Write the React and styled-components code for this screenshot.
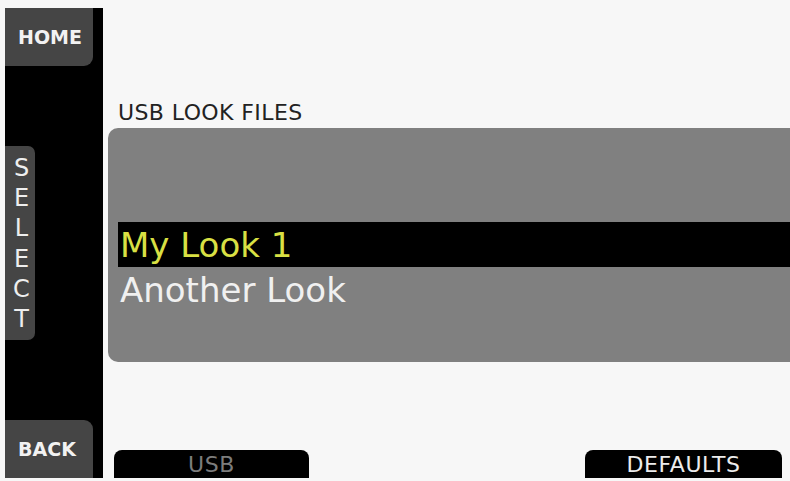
import React from "react";
import styled, { createGlobalStyle } from "styled-components";

const GlobalStyle = createGlobalStyle`
  html, body {
    margin: 0;
    padding: 0;
    background: #f7f7f7;
  }
  body {
    font-family: "DejaVu Sans", "Liberation Sans", sans-serif;
  }
`;

const Screen = styled.div`
  width: 790px;
  height: 481px;
  display: flex;
  box-sizing: border-box;
  padding: 8px 0 3px 5px;
  background: #f7f7f7;
  overflow: hidden;
`;

const Sidebar = styled.div`
  width: 98px;
  background: #000;
  display: flex;
  flex-direction: column;
  justify-content: space-between;
  align-items: flex-start;
`;

const SideButton = styled.div`
  width: 88px;
  height: 58px;
  background: #454545;
  color: #f2f2f2;
  font-size: 19px;
  font-weight: bold;
  display: flex;
  align-items: center;
  padding-left: 13px;
  box-sizing: border-box;
  border-radius: ${(p) => (p.top ? "0 0 9px 0" : "0 9px 0 0")};
`;

const SelectTab = styled.div`
  width: 30px;
  height: 194px;
  background: #454545;
  border-radius: 0 7px 7px 0;
  display: flex;
  flex-direction: column;
  align-items: center;
  justify-content: space-between;
  padding: 8px 0 7px 3px;
  box-sizing: border-box;
  color: #eee;
  font-size: 24px;
  line-height: 28px;
`;

const Main = styled.div`
  flex: 1;
  display: flex;
  flex-direction: column;
  padding-left: 5px;
`;

const Title = styled.div`
  margin: 90px 0 0 10px;
  height: 30px;
  color: #222;
  font-size: 22px;
  letter-spacing: 0.4px;
  line-height: 30px;
`;

const Panel = styled.div`
  height: 234px;
  background: #808080;
  border-radius: 10px 0 0 10px;
  padding: 94px 0 0 10px;
  box-sizing: border-box;
`;

const Row = styled.div`
  height: 45px;
  display: flex;
  align-items: center;
  padding-left: 2px;
  font-size: 34px;
  background: ${(p) => (p.active ? "#000" : "transparent")};
  color: ${(p) => (p.active ? "#d9e044" : "#f0f0f0")};
`;

const Footer = styled.div`
  margin-top: auto;
  display: flex;
  justify-content: space-between;
  padding: 0 8px 0 6px;
`;

const SoftKey = styled.div`
  width: ${(p) => p.w}px;
  height: 28px;
  background: #000;
  border-radius: 8px 8px 0 0;
  color: ${(p) => (p.dim ? "#7c7c7c" : "#ececec")};
  font-size: 22px;
  letter-spacing: 0.6px;
  display: flex;
  align-items: center;
  justify-content: center;
`;

const looks = ["My Look 1", "Another Look"];

export default function App() {
  return (
    <>
      <GlobalStyle />
      <Screen>
        <Sidebar>
          <SideButton top>HOME</SideButton>
          <SelectTab>
            {"SELECT".split("").map((c, i) => (
              <span key={i}>{c}</span>
            ))}
          </SelectTab>
          <SideButton>BACK</SideButton>
        </Sidebar>
        <Main>
          <Title>USB LOOK FILES</Title>
          <Panel>
            {looks.map((l, i) => (
              <Row key={l} active={i === 0}>
                {l}
              </Row>
            ))}
          </Panel>
          <Footer>
            <SoftKey w={195} dim>
              USB
            </SoftKey>
            <SoftKey w={197}>DEFAULTS</SoftKey>
          </Footer>
        </Main>
      </Screen>
    </>
  );
}
